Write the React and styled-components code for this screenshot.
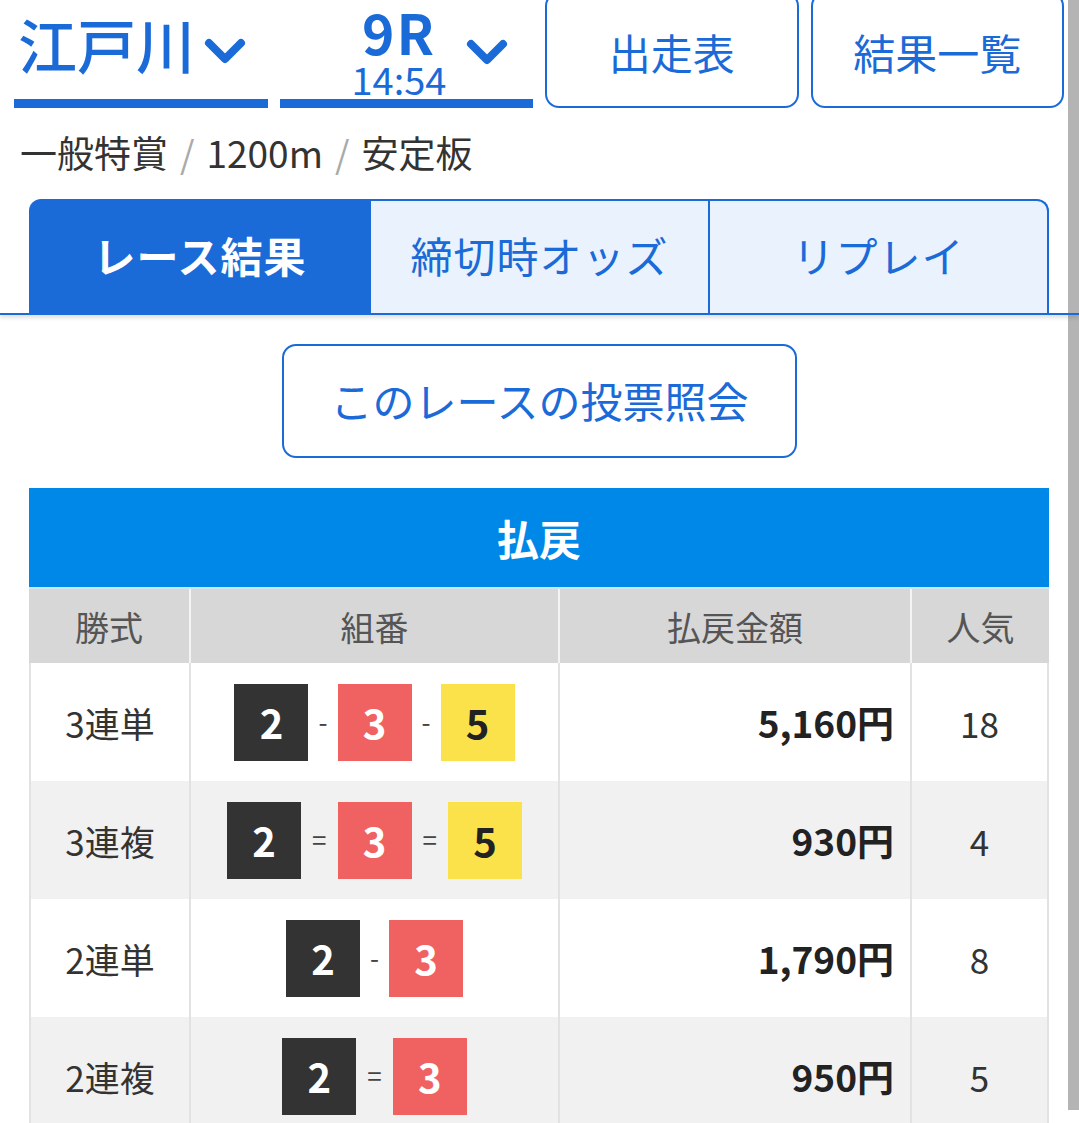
import React from "react";
import styled, { createGlobalStyle } from "styled-components";

const GlobalStyle = createGlobalStyle`
  html, body {
    margin: 0;
    padding: 0;
    background: #fff;
    overflow: hidden;
  }
  body {
    font-family: "Noto Sans CJK JP", "Noto Sans", sans-serif;
    color: #333;
  }
`

const BLUE = "#1a6ad8";

const Page = styled.div`
  width: 1079px;
  height: 1123px;
  overflow: hidden;
  display: flex;
`

const Main = styled.div`
  width: 1068px;
  flex: none;
`

const ScrollTrack = styled.div`
  width: 11px;
  flex: none;
  display: flex;
  flex-direction: column;
`

const ScrollThumb = styled.div`
  height: 1110px;
  background: #b4b4b4;
`

const Header = styled.div`
  display: grid;
  grid-template-columns: repeat(4, 253.5px);
  gap: 12px;
  height: 116px;
  margin-top: -8px;
  padding-left: 14px;
`

const Dropdown = styled.div`
  display: flex;
  align-items: flex-start;
  padding-left: ${(p) => p.$pad || 0}px;
  gap: ${(p) => p.$gap || 0}px;
  border-bottom: 9px solid ${BLUE};
  color: ${BLUE};
`

const Venue = styled.span`
  font-size: 59px;
  font-weight: 500;
  line-height: 70px;
  margin-top: 17px;
`

const RaceBox = styled.div`
  display: flex;
  flex-direction: column;
  align-items: center;
  margin-top: 11px;
`

const RaceNo = styled.span`
  font-size: 55px;
  font-weight: 700;
  line-height: 56px;
  letter-spacing: 2px;
`

const RaceTime = styled.span`
  font-size: 38px;
  line-height: 40px;
`

const Chevron = styled.svg`
  width: ${(p) => p.$w}px;
  height: 32px;
  flex: none;
  margin-top: ${(p) => p.$mt || 0}px;
`

const NavButton = styled.div`
  border: 2px solid ${BLUE};
  border-radius: 14px;
  display: flex;
  align-items: center;
  justify-content: center;
  color: ${BLUE};
  font-size: 42px;
  padding-top: 2px;
`

const Subtitle = styled.div`
  margin: 22px 0 0 20px;
  font-size: 37px;
  line-height: 44px;
  color: #333;
`

const Slash = styled.span`
  color: #aaa;
  margin: 0 12px;
`

const TabStrip = styled.div`
  position: relative;
  z-index: 2;
  margin-top: 25px;
  margin-right: -11px;
  padding: 0 30px 0 29px;
  border-bottom: 2px solid ${BLUE};
  box-shadow: 0 3px 4px rgba(0, 0, 0, 0.12);
  display: flex;
  height: 114px;
`

const Tab = styled.div`
  flex: ${(p) => (p.$active ? "0 0 342px" : "1")};
  display: flex;
  align-items: center;
  justify-content: center;
  padding-bottom: 6px;
  font-size: 42px;
  font-weight: ${(p) => (p.$active ? 700 : 400)};
  color: ${(p) => (p.$active ? "#fff" : BLUE)};
  background: ${(p) => (p.$active ? BLUE : "#eaf2fd")};
  border-top: 2px solid ${BLUE};
  border-right: ${(p) => (p.$active ? "none" : `2px solid ${BLUE}`)};
  border-radius: ${(p) => (p.$first ? "12px 0 0 0" : p.$last ? "0 12px 0 0" : "0")};
  letter-spacing: 1px;
`

const QueryButton = styled.div`
  width: 515px;
  height: 114px;
  box-sizing: border-box;
  margin: 29px 0 0 282px;
  border: 2px solid ${BLUE};
  border-radius: 14px;
  display: flex;
  align-items: center;
  justify-content: center;
  padding-bottom: 4px;
  color: ${BLUE};
  font-size: 42px;
`

const Table = styled.div`
  margin: 30px 19px 0 29px;
`

const TableTitle = styled.div`
  height: 99px;
  background: #0088e8;
  color: #fff;
  font-size: 42px;
  font-weight: 700;
  display: flex;
  align-items: center;
  justify-content: center;
  border-bottom: 2px solid #cfe6f7;
`

const Grid = styled.div`
  display: grid;
  grid-template-columns: 160px 369px 352px 1fr;
`

const HeadCell = styled.div`
  height: 74px;
  background: #d7d7d7;
  color: #555;
  font-size: 34px;
  display: flex;
  align-items: center;
  justify-content: center;
  border-left: ${(p) => (p.$first ? "none" : "2px solid #f4f4f4")};
`

const Cell = styled.div`
  height: 118px;
  box-sizing: border-box;
  background: ${(p) => (p.$alt ? "#f1f1f1" : "#fff")};
  display: flex;
  align-items: center;
  justify-content: ${(p) => p.$align || "center"};
  padding-right: ${(p) => (p.$align === "flex-end" ? "16px" : "0")};
  border-left: 2px solid #e2e2e2;
  border-right: ${(p) => (p.$last ? "2px solid #e2e2e2" : "none")};
  font-size: 35px;
  color: #333;
`

const Amount = styled.span`
  font-size: 37px;
  font-weight: 700;
  color: #222;
`

const Boat = styled.span`
  width: 74px;
  height: 77px;
  display: flex;
  align-items: center;
  justify-content: center;
  font-size: 40px;
  font-weight: 700;
  background: ${(p) => p.$bg};
  color: ${(p) => p.$fg};
`

const Sep = styled.span`
  font-size: 26px;
  color: #444;
  padding: 0 ${(p) => p.$pad}px;
  margin-top: -3px;
`

const BOATS = {
  2: { bg: "#333333", fg: "#fff" },
  3: { bg: "#f06262", fg: "#fff" },
  5: { bg: "#fbe14a", fg: "#222" },
};

const rows = [
  { kind: "3連単", nums: [2, 3, 5], sep: "-", amount: "5,160円", pop: "18" },
  { kind: "3連複", nums: [2, 3, 5], sep: "=", amount: "930円", pop: "4" },
  { kind: "2連単", nums: [2, 3], sep: "-", amount: "1,790円", pop: "8" },
  { kind: "2連複", nums: [2, 3], sep: "=", amount: "950円", pop: "5" },
];

const Down = ({ w, mt }) => (
  <Chevron $w={w} $mt={mt} viewBox="0 0 44 32">
    <polyline points="6,8 22,24 38,8" fill="none" stroke={BLUE} strokeWidth="8" strokeLinecap="round" strokeLinejoin="round" />
  </Chevron>
)

const Combo = ({ nums, sep }) => (
  <>
    {nums.map((n, i) => (
      <React.Fragment key={i}>
        {i > 0 && <Sep $pad={sep === "=" ? 11 : 10}>{sep}</Sep>}
        <Boat $bg={BOATS[n].bg} $fg={BOATS[n].fg}>{n}</Boat>
      </React.Fragment>
    ))}
  </>
)

const App = () => {
  return (
    <Page>
      <GlobalStyle />
      <Main>
        <Header>
          <Dropdown $pad={4} $gap={8}>
            <Venue>江戸川</Venue>
            <Down w={44} mt={43} />
          </Dropdown>
          <Dropdown $pad={72} $gap={18}>
            <RaceBox>
              <RaceNo>9R</RaceNo>
              <RaceTime>14:54</RaceTime>
            </RaceBox>
            <Down w={46} mt={44} />
          </Dropdown>
          <NavButton>出走表</NavButton>
          <NavButton>結果一覧</NavButton>
        </Header>

        <Subtitle>
          一般特賞<Slash>/</Slash>1200m<Slash>/</Slash>安定板
        </Subtitle>

        <TabStrip>
          <Tab $active $first>レース結果</Tab>
          <Tab>締切時オッズ</Tab>
          <Tab $last>リプレイ</Tab>
        </TabStrip>

        <QueryButton>このレースの投票照会</QueryButton>

        <Table>
          <TableTitle>払戻</TableTitle>
          <Grid>
            <HeadCell $first>勝式</HeadCell>
            <HeadCell>組番</HeadCell>
            <HeadCell>払戻金額</HeadCell>
            <HeadCell>人気</HeadCell>
            {rows.map((r, i) => (
              <React.Fragment key={r.kind}>
                <Cell $alt={i % 2 === 1}>{r.kind}</Cell>
                <Cell $alt={i % 2 === 1}>
                  <Combo nums={r.nums} sep={r.sep} />
                </Cell>
                <Cell $alt={i % 2 === 1} $align="flex-end">
                  <Amount>{r.amount}</Amount>
                </Cell>
                <Cell $alt={i % 2 === 1} $last>{r.pop}</Cell>
              </React.Fragment>
            ))}
          </Grid>
        </Table>
      </Main>
      <ScrollTrack>
        <ScrollThumb />
      </ScrollTrack>
    </Page>
  )
}

export default App;
